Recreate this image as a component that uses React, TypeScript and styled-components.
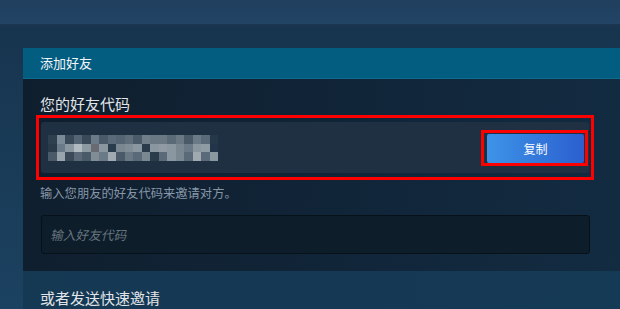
import React from "react"
import styled, { createGlobalStyle } from "styled-components"

const GlobalStyle = createGlobalStyle`
  html, body {
    margin: 0;
    padding: 0;
    background: #183550;
  }
  body {
    font-family: "Noto Sans CJK SC", "Noto Sans", Arial, sans-serif;
  }
`

const Page = styled.div`
  width: 620px;
  height: 309px;
  overflow: hidden;
  background: linear-gradient(180deg, #17334c 0%, #1b4261 100%);
`

const TopBar = styled.div`
  height: 24px;
  background: linear-gradient(180deg, #213f5f 0%, #224465 100%);
  border-bottom: 3px solid #1b3550;
`

const Content = styled.div`
  padding: 21px 0 0 23px;
`

const Panel = styled.div`
  width: 620px;
`

const PanelHeader = styled.div`
  height: 30px;
  line-height: 30px;
  padding-left: 17px;
  background: #025d81;
  border-bottom: 1px solid #0d6b8f;
  color: #f2f5f7;
  font-size: 13px;
`

const PanelBody = styled.div`
  padding: 15px 0 17px 17px;
  background: linear-gradient(100deg, #0f1e2d 0%, #11263a 60%, #132c42 100%);
`

const SectionTitle = styled.div`
  font-size: 15px;
  line-height: 20px;
  color: #e1e5e8;
`

const Highlight = styled.div`
  box-sizing: border-box;
  width: 558px;
  margin: 1px 0 0 -4px;
  border: 3px solid #ff0000;
  padding: 4px 2px;
`

const CodeBox = styled.div`
  box-sizing: border-box;
  height: 51px;
  display: flex;
  align-items: center;
  justify-content: space-between;
  padding: 0 1px 0 7px;
  background: #1e3041;
  border-radius: 3px;
`

const Mosaic = styled.div`
  display: grid;
  grid-template-columns: repeat(20, 8.5px);
  grid-auto-rows: 8.7px;
  margin-top: 1px;
`

const Pixel = styled.div<{ $c: string }>`
  background: ${p => p.$c};
`

const ButtonHighlight = styled.div`
  border: 3px solid #ff0000;
  padding: 1px 1px 0 3px;
  display: flex;
`

const CopyButton = styled.button`
  width: 97px;
  height: 29px;
  border: none;
  border-radius: 2px;
  background: linear-gradient(90deg, #3d94e8 0%, #2b5fcf 100%);
  color: #ffffff;
  font-family: inherit;
  font-size: 12px;
  cursor: pointer;
  padding: 0;
`

const Hint = styled.div`
  margin-top: 4px;
  font-size: 12.3px;
  line-height: 18px;
  color: #8797a7;
`

const CodeInput = styled.input`
  box-sizing: border-box;
  display: block;
  width: 549px;
  height: 39px;
  margin: 13px 0 0 1px;
  padding: 0 8px;
  background: #0d1d2a;
  border: 1px solid #07111a;
  border-radius: 3px;
  color: #dfe3e6;
  font-family: inherit;
  font-size: 12.7px;
  outline: none;
  &::placeholder {
    color: #66747f;
    font-style: italic;
  }
`

const QuickInvite = styled.div`
  padding: 17px 0 0 17px;
  height: 60px;
  background: linear-gradient(100deg, #153853 0%, #153a56 100%);
`

const mosaic = [
  ["#2e4050", "#7a8a96", "#3a4a58", "#556575", "#3a4a58", "#6a7a86", "#4a5a68", "#5a6a78", "#556472", "#606e7c", "#4a5a68", "#707e8a", "#6a7884", "#6a7884", "#5a6a76", "#6a7884", "#4a5a68", "#6a7a86", "#5a6a78", "#25384a"],
  ["#2a3a48", "#6a7a88", "#8a96a0", "#b0bac0", "#8a9aa0", "#6a6a72", "#8a96a0", "#283c4c", "#7a8690", "#808c96", "#8a96a0", "#2a3c4c", "#8a96a0", "#909aa4", "#8a96a0", "#7a8690", "#6a7a88", "#8a96a0", "#909ca4", "#22344a"],
  ["#4a5a68", "#9aa4ac", "#3a4a58", "#5a6878", "#4a5a68", "#808c96", "#6a7a86", "#a0aab0", "#4a5a68", "#6a7886", "#5a6a78", "#7a8892", "#2a3c4a", "#5a6a78", "#8a96a0", "#7a8892", "#5a6a78", "#a0a8b0", "#5a6a78", "#8a96a0"]
]

export default function App() {
  return (
    <Page>
      <GlobalStyle />
      <TopBar />
      <Content>
        <Panel>
          <PanelHeader>添加好友</PanelHeader>
          <PanelBody>
            <SectionTitle>您的好友代码</SectionTitle>
            <Highlight>
              <CodeBox>
                <Mosaic>
                  {mosaic.flatMap((row, i) =>
                    row.map((c, j) => <Pixel key={`${i}-${j}`} $c={c} />)
                  )}
                </Mosaic>
                <ButtonHighlight>
                  <CopyButton>复制</CopyButton>
                </ButtonHighlight>
              </CodeBox>
            </Highlight>
            <Hint>输入您朋友的好友代码来邀请对方。</Hint>
            <CodeInput placeholder="输入好友代码" />
          </PanelBody>
          <QuickInvite>
            <SectionTitle>或者发送快速邀请</SectionTitle>
          </QuickInvite>
        </Panel>
      </Content>
    </Page>
  )
}
